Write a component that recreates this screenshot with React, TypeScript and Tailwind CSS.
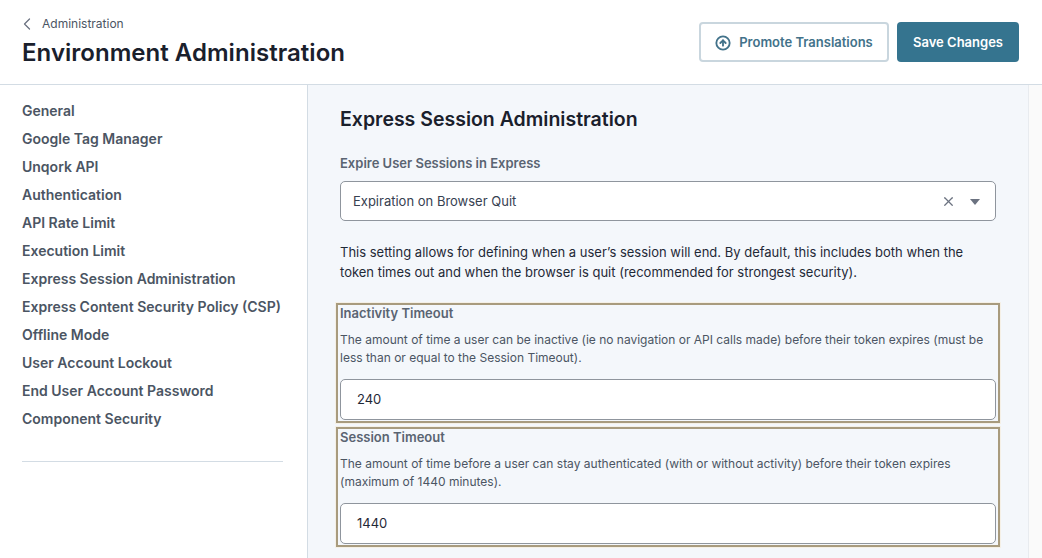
import { ChevronLeft, CircleArrowUp, X } from "lucide-react";

const navItems = [
  "General",
  "Google Tag Manager",
  "Unqork API",
  "Authentication",
  "API Rate Limit",
  "Execution Limit",
  "Express Session Administration",
  "Express Content Security Policy (CSP)",
  "Offline Mode",
  "User Account Lockout",
  "End User Account Password",
  "Component Security",
];

function TimeoutField({ label, help, value }: { label: string; help: string; value: string }) {
  return (
    <div className="w-[664px] h-[120px] -mx-1 border-2 border-[#a89b7e] px-[2px] shadow-[0_0_0_1px_#f5f0e6]">
      <div className="text-[13px] leading-[16px] font-semibold text-[#5a6472]">{label}</div>
      <p className="mt-[10px] text-[12px] leading-[18px] text-[#4b5563]">{help}</p>
      <div className="mt-[12px] h-[41px] rounded-[5px] border border-[#8f959d] bg-white pl-4 flex items-center text-[13px] text-[#1f2937]">
        {value}
      </div>
    </div>
  );
}

export default function App() {
  return (
    <div className="w-[1042px] h-[558px] overflow-hidden bg-white font-['Inter',sans-serif] flex flex-col">
      <header className="h-[85px] shrink-0 border-b border-[#d3dce4] pl-[22px] pr-[23px] flex justify-between">
        <div className="pt-[16px]">
          <div className="flex items-center gap-[5px] h-[16px] text-[12px] text-[#4b5563]">
            <ChevronLeft className="w-[20px] h-[20px] -ml-[5px] text-[#6b7280]" strokeWidth={1.5} />
            <span>Administration</span>
          </div>
          <h1 className="mt-[4px] text-[24px] leading-[34px] font-semibold tracking-[0.03px] text-[#1a202c]">Environment Administration</h1>
        </div>
        <div className="pt-[22px] flex gap-2">
          <button className="h-[40px] w-[190px] rounded-[4px] border-2 border-[#c9d6de] bg-white pt-[1px] flex items-center justify-center gap-[8px] text-[13px] font-semibold text-[#42728a]">
            <CircleArrowUp className="w-[16px] h-[16px]" strokeWidth={2.75} />
            Promote Translations
          </button>
          <button className="h-[40px] w-[122px] rounded-[4px] bg-[#35748f] pt-[1px] text-[13px] font-semibold text-white">Save Changes</button>
        </div>
      </header>
      <div className="flex flex-1 min-h-0">
        <aside className="w-[308px] shrink-0 border-r border-[#d3dce4] pl-[22px] pr-[24px] pt-[11px]">
          <nav className="flex flex-col">
            {navItems.map((item) => (
              <a key={item} className="h-[28px] flex items-center text-[14px] font-semibold text-[#4b5563] whitespace-nowrap">
                {item}
              </a>
            ))}
          </nav>
          <div className="mt-[29px] border-t border-[#d3dce4]" />
        </aside>
        <main className="w-[721px] shrink-0 bg-[#f4f7fb] border-r border-[#e8ebef] pl-[32px] pr-[32px] pt-[20px]">
          <h2 className="text-[19.5px] leading-[28px] font-semibold text-[#1a202c]">Express Session Administration</h2>
          <div className="mt-[22px] text-[13px] leading-[16px] font-semibold text-[#5a6472]">Expire User Sessions in Express</div>
          <div className="mt-[10px] h-[40px] rounded-[5px] border border-[#8f959d] bg-white pl-3 pr-[15px] pt-[1px] flex items-center justify-between text-[13px] text-[#374151]">
            <span>Expiration on Browser Quit</span>
            <div className="flex items-center gap-[14px]">
              <X className="w-[15px] h-[15px] text-[#6b7280]" strokeWidth={2} />
              <svg width="10" height="6" viewBox="0 0 10 6" className="text-[#6b7280]">
                <path d="M0 0h10L5 6z" fill="currentColor" />
              </svg>
            </div>
          </div>
          <p className="mt-[21px] text-[13px] leading-[20px] text-[#1f2937]">
            This setting allows for defining when a user’s session will end. By default, this includes both when the token times out and when the browser is quit (recommended for strongest security).
          </p>
          <div className="mt-[21px] flex flex-col gap-[4px]">
            <TimeoutField
              label="Inactivity Timeout"
              help="The amount of time a user can be inactive (ie no navigation or API calls made) before their token expires (must be less than or equal to the Session Timeout)."
              value="240"
            />
            <TimeoutField
              label="Session Timeout"
              help="The amount of time before a user can stay authenticated (with or without activity) before their token expires (maximum of 1440 minutes)."
              value="1440"
            />
          </div>
        </main>
        <div className="flex-1 bg-[#fafafa]" />
      </div>
    </div>
  );
}
